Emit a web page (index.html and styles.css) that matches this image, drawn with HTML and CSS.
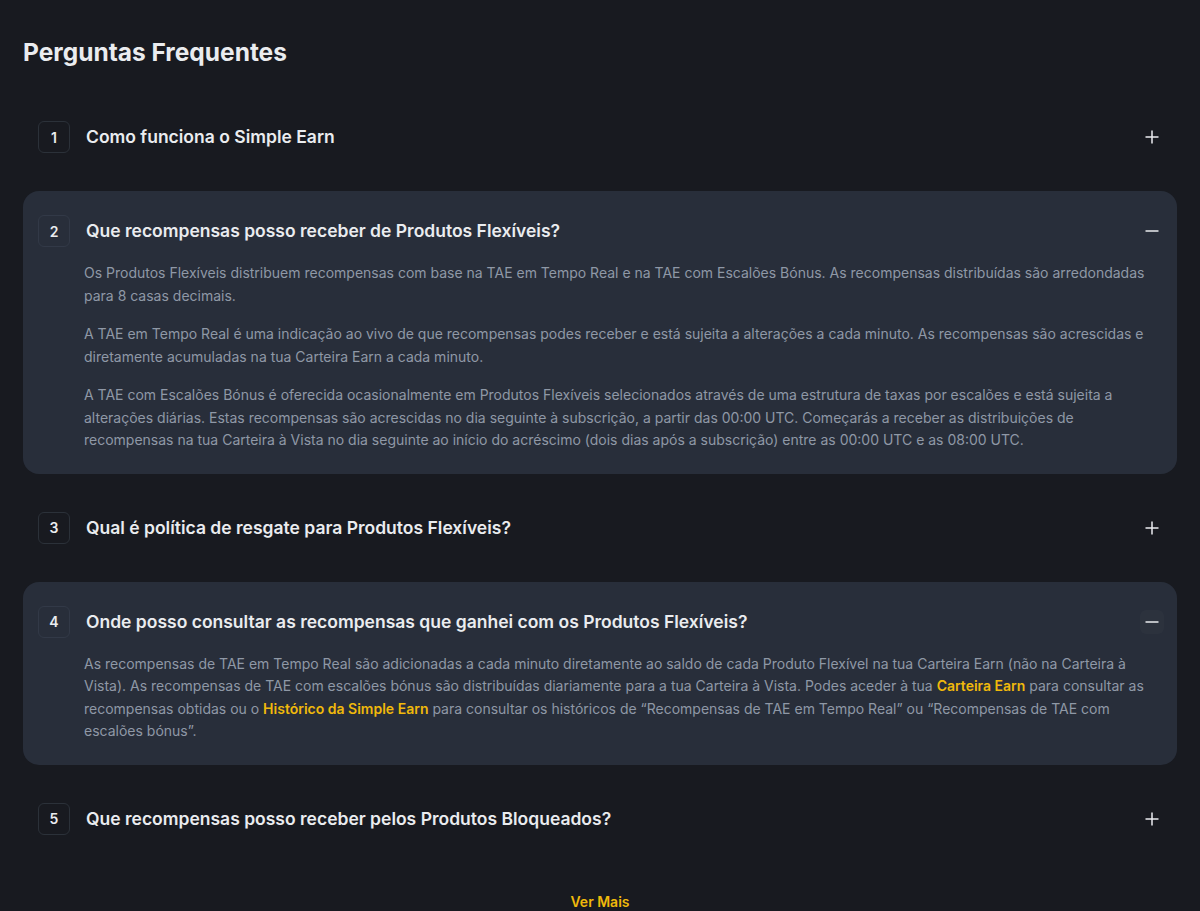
FILE: index.html
```html
<!DOCTYPE html>
<html>
<head>
    <title>Perguntas Frequentes</title>
    <link rel="stylesheet" href="styles.css">
</head>
<body>
    <div class="faq">
        <h2 class="faq-title">Perguntas Frequentes</h2>

        <div class="faq-list">
            <div class="faq-item">
                <div class="faq-head">
                    <span class="faq-num">1</span>
                    <span class="faq-q">Como funciona o Simple Earn</span>
                    <span class="faq-toggle"><svg width="16" height="16" viewBox="0 0 16 16"><path d="M8 1.5v13M1.5 8h13" stroke="#eaecef" stroke-width="1.5"/></svg></span>
                </div>
            </div>

            <div class="faq-item open">
                <div class="faq-head">
                    <span class="faq-num">2</span>
                    <span class="faq-q">Que recompensas posso receber de Produtos Flexíveis?</span>
                    <span class="faq-toggle"><svg width="16" height="16" viewBox="0 0 16 16"><path d="M1.5 8h13" stroke="#eaecef" stroke-width="1.5"/></svg></span>
                </div>
                <div class="faq-answer">
                    <p>Os Produtos Flexíveis distribuem recompensas com base na TAE em Tempo Real e na TAE com Escalões Bónus. As recompensas distribuídas são arredondadas para 8 casas decimais.</p>
                    <p>A TAE em Tempo Real é uma indicação ao vivo de que recompensas podes receber e está sujeita a alterações a cada minuto. As recompensas são acrescidas e diretamente acumuladas na tua Carteira Earn a cada minuto.</p>
                    <p>A TAE com Escalões Bónus é oferecida ocasionalmente em Produtos Flexíveis selecionados através de uma estrutura de taxas por escalões e está sujeita a alterações diárias. Estas recompensas são acrescidas no dia seguinte à subscrição, a partir das 00:00 UTC. Começarás a receber as distribuições de recompensas na tua Carteira à Vista no dia seguinte ao início do acréscimo (dois dias após a subscrição) entre as 00:00 UTC e as 08:00 UTC.</p>
                </div>
            </div>

            <div class="faq-item">
                <div class="faq-head">
                    <span class="faq-num">3</span>
                    <span class="faq-q">Qual é política de resgate para Produtos Flexíveis?</span>
                    <span class="faq-toggle"><svg width="16" height="16" viewBox="0 0 16 16"><path d="M8 1.5v13M1.5 8h13" stroke="#eaecef" stroke-width="1.5"/></svg></span>
                </div>
            </div>

            <div class="faq-item open">
                <div class="faq-head">
                    <span class="faq-num">4</span>
                    <span class="faq-q">Onde posso consultar as recompensas que ganhei com os Produtos Flexíveis?</span>
                    <span class="faq-toggle hover"><svg width="16" height="16" viewBox="0 0 16 16"><path d="M1.5 8h13" stroke="#eaecef" stroke-width="1.5"/></svg></span>
                </div>
                <div class="faq-answer">
                    <p>As recompensas de TAE em Tempo Real são adicionadas a cada minuto diretamente ao saldo de cada Produto Flexível na tua Carteira Earn (não na Carteira à Vista). As recompensas de TAE com escalões bónus são distribuídas diariamente para a tua Carteira à Vista. Podes aceder à tua <a href="#">Carteira Earn</a> para consultar as recompensas obtidas ou o <a href="#">Histórico da Simple Earn</a> para consultar os históricos de “Recompensas de TAE em Tempo Real” ou “Recompensas de TAE com escalões bónus”.</p>
                </div>
            </div>

            <div class="faq-item">
                <div class="faq-head">
                    <span class="faq-num">5</span>
                    <span class="faq-q">Que recompensas posso receber pelos Produtos Bloqueados?</span>
                    <span class="faq-toggle"><svg width="16" height="16" viewBox="0 0 16 16"><path d="M8 1.5v13M1.5 8h13" stroke="#eaecef" stroke-width="1.5"/></svg></span>
                </div>
            </div>
        </div>

        <div class="faq-more"><a href="#">Ver Mais</a></div>
    </div>
</body>
</html>
```

FILE: styles.css
```css
body {
    margin: 0;
    background: #181a20;
    color: #eaecef;
    font-family: Inter, "Noto Sans", sans-serif;
}
.faq {
    padding: 36px 23px 0;
}
.faq-title {
    margin: 0;
    font-size: 24.5px;
    line-height: 32px;
    font-weight: 700;
}
.faq-list {
    display: flex;
    flex-direction: column;
    gap: 14px;
    margin-top: 29px;
}
.faq-item {
    padding: 24px 16px 24px 15px;
    border-radius: 16px;
}
.faq-item.open {
    background: #282e3a;
    padding-bottom: 22px;
}
.faq-head {
    display: flex;
    align-items: center;
    gap: 16px;
}
.faq-num {
    width: 30px;
    height: 30px;
    flex: none;
    display: flex;
    align-items: center;
    justify-content: center;
    border: 1px solid #2b3139;
    border-radius: 6px;
    font-size: 14px;
    font-weight: 600;
}
.open .faq-num {
    border-color: #323947;
}
.faq-q {
    flex: 1;
    font-size: 17.5px;
    font-weight: 600;
    line-height: 28px;
}
.faq-toggle {
    width: 24px;
    height: 24px;
    display: flex;
    align-items: center;
    justify-content: center;
    margin-right: -3px;
    border-radius: 6px;
}
.faq-toggle.hover {
    background: rgba(255, 255, 255, 0.02);
}
.faq-answer {
    padding: 15px 0 0 46px;
    color: #8f98a6;
    font-size: 14px;
    line-height: 22.5px;
}
.faq-answer p {
    margin: 0 0 16px;
}
.faq-answer p:last-child {
    margin-bottom: 0;
}
.faq-answer a {
    color: #f0b90b;
    font-weight: 600;
    text-decoration: none;
}
.faq-more {
    text-align: center;
    padding-top: 32px;
}
.faq-more a {
    color: #f0b90b;
    font-size: 14px;
    font-weight: 600;
    text-decoration: none;
}
```
